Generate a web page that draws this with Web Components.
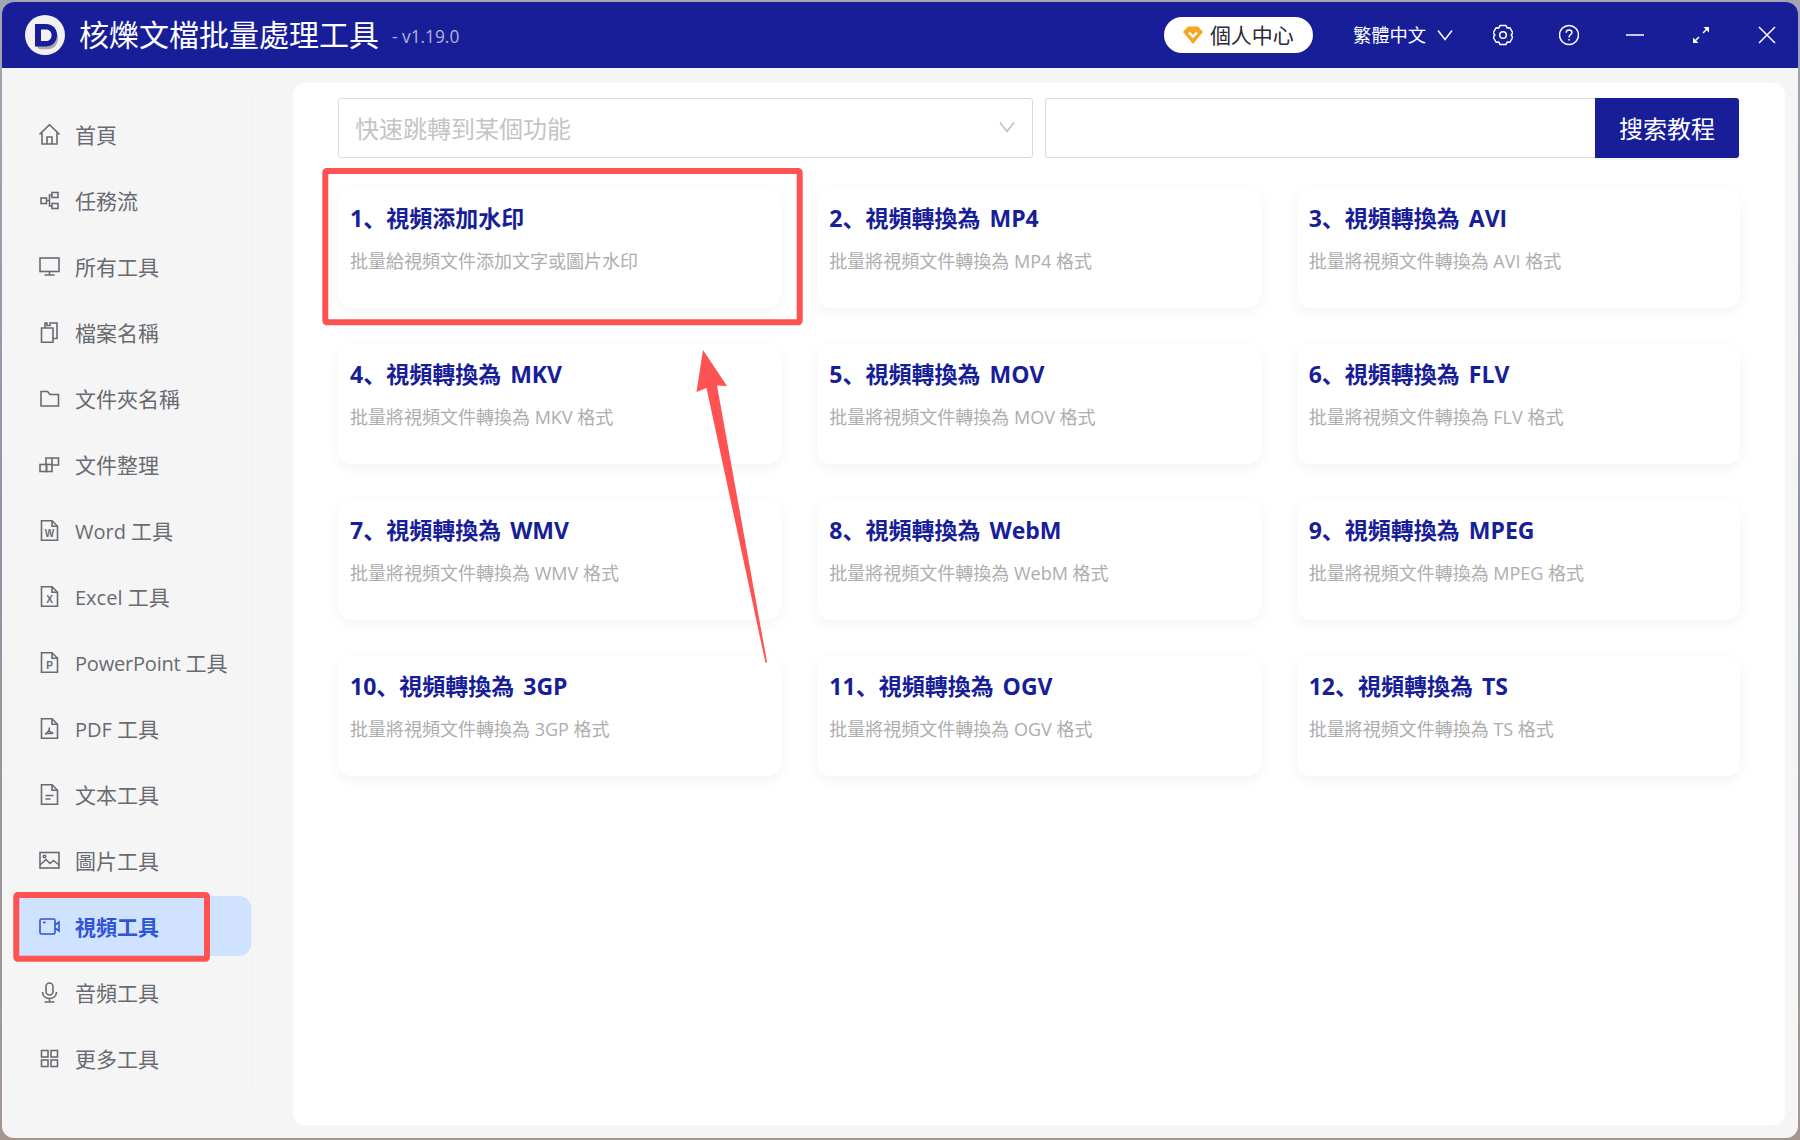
<!DOCTYPE html>
<html lang="zh">
<head>
<meta charset="utf-8">
<title>核爍文檔批量處理工具</title>
<style>
  html, body { margin: 0; height: 100%; }
  body {
    position: relative;
    width: 1800px;
    height: 1140px;
    overflow: hidden;
    background: linear-gradient(180deg, #a3a6b2 0%, #8e95a5 45%, #a49792 100%);
    font-family: "Open Sans", "Noto Sans CJK SC", sans-serif;
  }
  /* latin labels in the menu run a touch smaller than the CJK beside them */
  .en { font-size: 20px; }
</style>
</head>
<body>
<app-window>
  <title-bar slot="top"></title-bar>
  <side-nav slot="side">
    <nav-item icon="home">首頁</nav-item>
    <nav-item icon="flow">任務流</nav-item>
    <nav-item icon="monitor">所有工具</nav-item>
    <nav-item icon="files">檔案名稱</nav-item>
    <nav-item icon="folder">文件夾名稱</nav-item>
    <nav-item icon="blocks">文件整理</nav-item>
    <nav-item icon="word"><span class="en">Word </span>工具</nav-item>
    <nav-item icon="excel"><span class="en">Excel </span>工具</nav-item>
    <nav-item icon="ppt"><span class="en" style="letter-spacing:-.2px">PowerPoint </span>工具</nav-item>
    <nav-item icon="pdf"><span class="en">PDF </span>工具</nav-item>
    <nav-item icon="text">文本工具</nav-item>
    <nav-item icon="image">圖片工具</nav-item>
    <nav-item icon="video" active>視頻工具</nav-item>
    <nav-item icon="mic">音頻工具</nav-item>
    <nav-item icon="grid">更多工具</nav-item>
  </side-nav>
  <content-panel>
    <search-row></search-row>
    <card-grid>
      <tool-card heading="1、視頻添加水印">批量給視頻文件添加文字或圖片水印</tool-card>
      <tool-card heading="2、視頻轉換為 MP4">批量將視頻文件轉換為 MP4 格式</tool-card>
      <tool-card heading="3、視頻轉換為 AVI">批量將視頻文件轉換為 AVI 格式</tool-card>
      <tool-card heading="4、視頻轉換為 MKV">批量將視頻文件轉換為 MKV 格式</tool-card>
      <tool-card heading="5、視頻轉換為 MOV">批量將視頻文件轉換為 MOV 格式</tool-card>
      <tool-card heading="6、視頻轉換為 FLV">批量將視頻文件轉換為 FLV 格式</tool-card>
      <tool-card heading="7、視頻轉換為 WMV">批量將視頻文件轉換為 WMV 格式</tool-card>
      <tool-card heading="8、視頻轉換為 WebM">批量將視頻文件轉換為 WebM 格式</tool-card>
      <tool-card heading="9、視頻轉換為 MPEG">批量將視頻文件轉換為 MPEG 格式</tool-card>
      <tool-card heading="10、視頻轉換為 3GP">批量將視頻文件轉換為 3GP 格式</tool-card>
      <tool-card heading="11、視頻轉換為 OGV">批量將視頻文件轉換為 OGV 格式</tool-card>
      <tool-card heading="12、視頻轉換為 TS">批量將視頻文件轉換為 TS 格式</tool-card>
    </card-grid>
  </content-panel>
</app-window>
<mark-up></mark-up>

<script>
// file outline shared by the document icons, the letter/glyph goes on top
const FILE = `<path d="M2.5 .8h10.500l5.500 5.500v13.900H2.500z"/><path d="M13 .8v5.500h5.500"/>`;
const fileLetter = (c) => `${FILE}<text x="10.5" y="16.500" text-anchor="middle" font-family="Liberation Sans, sans-serif" font-size="10" font-weight="700" fill="currentColor" stroke="none">${c}</text>`;

const ICONS = {
  home: `<path d="M.5 10.500 10.500 .8 20.500 10.500"/><path d="M3 8.500V20H18V8.500"/><path d="M8 20V13H13V20"/>`,
  flow: `<rect x="2" y="8" width="5.500" height="5.500"/><rect x="13" y="2.500" width="6" height="5"/><rect x="13" y="13.500" width="6" height="5"/><path d="M7.500 10.500H10.500V5H13M10.500 10.500V16H13"/>`,
  monitor: `<rect x="1" y="2" width="19" height="13.500"/><path d="M10.500 15.500V19M5.500 19H15.500"/>`,
  files: `<path d="M2.500 6H14V20.200H2.500z"/><path d="M6 6V1H8V3.500H11V1H18V16.500H14"/>`,
  folder: `<path d="M2 3.500H8.500L11 6.500H19.500V18H2z"/>`,
  blocks: `<rect x="1" y="10.500" width="6.500" height="7"/><rect x="7.500" y="10.500" width="5.500" height="7"/><path d="M7 10.500V4H19.500V11H13M13 4V10.500"/>`,
  word: fileLetter("W"),
  excel: fileLetter("X"),
  ppt: fileLetter("P"),
  pdf: `${FILE}<path d="M10.500 9.500c-.2 3-2 5.500-4.500 7M10 12.500c1 1.600 2.500 2.600 4.500 2.800M6.500 15.500h7"/>`,
  text: `${FILE}<path d="M6.500 11.500H14.500M6.500 15H11.500"/>`,
  image: `<rect x="1" y="2.500" width="19" height="15.500"/><circle cx="5.500" cy="6.500" r="1.300"/><path d="M1 15 7 9.500 11 13.500 14.500 10.500 20 15"/>`,
  video: `<rect x="1" y="3" width="15" height="15" rx="1.500"/><path d="M16 9 20 6V15L16 12"/><path d="M4 6.500H6.500"/>`,
  mic: `<rect x="7" y="1" width="7" height="12" rx="3.500"/><path d="M3.500 10c0 4 3 6.500 7 6.500s7-2.500 7-6.500M10.500 16.500V20M5.500 20H15.500"/>`,
  grid: `<rect x="2.500" y="2.500" width="6.500" height="6.500"/><rect x="12" y="2.500" width="6.500" height="6.500"/><rect x="2.500" y="12" width="6.500" height="6.500"/><rect x="12" y="12" width="6.500" height="6.500"/>`,
};

// six lobed gear outline, centre (10,11)
function gearPath() {
  const pts = [];
  for (let i = 0; i < 6; i++) {
    const a = (i * 60 - 90) * Math.PI / 180;
    for (const [d, r] of [[-17, 10], [17, 10], [30, 8.2]]) {
      const t = a + d * Math.PI / 180;
      pts.push((10 + r * Math.cos(t)).toFixed(2) + " " + (11 + r * Math.sin(t)).toFixed(2));
    }
  }
  return "M" + pts.join("L") + "Z";
}

class AppWindow extends HTMLElement {
  constructor() {
    super();
    this.attachShadow({ mode: "open" }).innerHTML = `
      <style>
        :host {
          display: grid;
          grid-template-columns: 291px 1fr;
          grid-template-rows: 66px 1fr;
          width: 1796px;
          height: 1136px;
          margin: 2px;
          background: #f5f5f5;
          border-radius: 12px;
          overflow: hidden;
        }
        ::slotted([slot="top"]) { grid-column: 1 / -1; }
      </style>
      <slot name="top"></slot>
      <slot name="side"></slot>
      <slot></slot>`;
  }
}

class TitleBar extends HTMLElement {
  constructor() {
    super();
    const ctl = 'fill="none" stroke="#fff" stroke-width="1.5"';
    this.attachShadow({ mode: "open" }).innerHTML = `
      <style>
        :host {
          display: flex;
          align-items: center;
          height: 66px;
          padding: 0 21px 0 23px;
          box-sizing: border-box;
          background: #181e98;
          color: #fff;
        }
        .logo { width: 40px; height: 40px; margin-right: 14px; flex: none; }
        .name { font-size: 30px; line-height: 40px; white-space: nowrap; }
        .ver { font-size: 17.3px; color: #b3b5dc; margin: 2px 0 0 13px; white-space: nowrap; }
        .pill {
          display: flex;
          align-items: center;
          width: 149px;
          height: 36px;
          margin-left: auto;
          padding-left: 19px;
          box-sizing: border-box;
          gap: 7px;
          background: #fff;
          border-radius: 18px;
          color: #2b2b33;
          font-size: 21px;
          white-space: nowrap;
        }
        .pill span { margin-top: -2px; }
        .lang { display: flex; align-items: center; gap: 11px; margin-left: 40px; font-size: 18.3px; white-space: nowrap; }
        .lang span { margin-top: -2px; }
        .ctl { display: flex; gap: 46px; margin-left: 40px; }
        svg { display: block; }
      </style>
      <svg class="logo" viewBox="0 0 40 40">
        <circle cx="20" cy="20" r="20" fill="#f1f1f1"/>
        <path d="M11 11H21C28 11 32 15 32 21.5C32 28 28 32.5 21 32.5H13.5L11 30Z" fill="#a9a9a9" transform="translate(1 1.8)"/>
        <path d="M10 9H21C28 9 32 14 32 20C32 27 27 31.5 21 31.5H10Z" fill="#181e98"/>
        <path d="M16 14.5H21C24.5 14.5 26.5 17 26.5 20.2C26.5 23.8 24 26 21 26H16Z" fill="#f1f1f1"/>
      </svg>
      <span class="name">核爍文檔批量處理工具</span>
      <span class="ver">- v1.19.0</span>
      <div class="pill">
        <svg width="20" height="18" viewBox="0 0 20 18"><path d="M5 .5H15L20 6 10 18 0 6Z" fill="#f5a623"/><path d="M6 6.5 10 10.5 14 6.5" fill="none" stroke="#fff" stroke-width="2.4"/></svg>
        <span>個人中心</span>
      </div>
      <div class="lang">
        <span>繁體中文</span>
        <svg width="16" height="12" viewBox="0 0 16 12"><path d="M1 1.5 8 10.5 15 1.5" ${ctl}/></svg>
      </div>
      <div class="ctl">
        <svg width="20" height="22" viewBox="0 0 20 22" ${ctl}><path d="${gearPath()}" stroke-linejoin="round"/><circle cx="10" cy="11" r="3.3"/></svg>
        <svg width="20" height="22" viewBox="0 0 20 22" ${ctl}><circle cx="10" cy="11" r="9.5"/><path d="M7.2 8.7C7.2 7 8.5 6 10 6C11.7 6 12.9 7 12.9 8.5C12.9 10.5 10 10.7 10 13.5"/><path d="M10 15V16.5"/></svg>
        <svg width="20" height="22" viewBox="0 0 20 22" ${ctl}><path d="M1 11H19"/></svg>
        <svg width="20" height="22" viewBox="0 0 20 22"><g ${ctl}><path d="M12 9 17 4M3 18 8 13"/></g><path d="M12.5 3H18V8.5ZM2 13.5V19H7.5Z" fill="#fff"/></svg>
        <svg width="20" height="22" viewBox="0 0 20 22" ${ctl}><path d="M2 3 18 19M18 3 2 19"/></svg>
      </div>`;
  }
}

class SideNav extends HTMLElement {
  constructor() {
    super();
    this.attachShadow({ mode: "open" }).innerHTML = `
      <style>
        :host {
          display: block;
          position: relative;
          padding: 36px 0 0 16px;
          width: 233px;
        }
        :host::after {
          content: "";
          position: absolute;
          left: 249px;
          top: 30px;
          bottom: 46px;
          width: 1px;
          background: #f0f0f0;
        }
        .list { display: flex; flex-direction: column; gap: 6px; }
      </style>
      <div class="list"><slot></slot></div>`;
  }
}

class NavItem extends HTMLElement {
  connectedCallback() {
    if (this.shadowRoot) return;
    this.attachShadow({ mode: "open" }).innerHTML = `
      <style>
        :host {
          display: flex;
          align-items: center;
          gap: 15px;
          height: 60px;
          padding-left: 21px;
          border-radius: 0 12px 12px 0;
          color: #676b72;
          font-size: 21px;
          white-space: pre;
        }
        :host([active]) {
          background: #cfe2ff;
          color: #2f55d4;
          font-weight: 700;
        }
        svg { flex: none; fill: none; stroke: currentColor; stroke-width: 1.6; }
      </style>
      <svg width="21" height="21" viewBox="0 0 21 21">${ICONS[this.getAttribute("icon")] || ""}</svg>
      <span><slot></slot></span>`;
  }
}

class ContentPanel extends HTMLElement {
  constructor() {
    super();
    this.attachShadow({ mode: "open" }).innerHTML = `
      <style>
        :host {
          display: flex;
          flex-direction: column;
          gap: 30px;
          margin: 15px 13px 13px 0;
          padding: 15px 45px 0;
          background: #fff;
          border-radius: 12px;
        }
      </style>
      <slot></slot>`;
  }
}

class SearchRow extends HTMLElement {
  constructor() {
    super();
    this.attachShadow({ mode: "open" }).innerHTML = `
      <style>
        :host {
          display: flex;
          height: 60px;
          margin-right: 1px;
          font-size: 24px;
        }
        .pick, .query { box-sizing: border-box; border: 1.5px solid #dcdcdc; }
        .pick {
          display: flex;
          align-items: center;
          justify-content: space-between;
          width: 695px;
          padding: 0 17px 2px 16px;
          border-radius: 3px;
          color: #c4c4c4;
        }
        .query { flex: 1; margin-left: 12px; border-right: 0; border-radius: 3px 0 0 3px; }
        .go {
          box-sizing: border-box;
          width: 144px;
          padding-bottom: 2px;
          display: flex;
          align-items: center;
          justify-content: center;
          background: #181e98;
          color: #fff;
          border-radius: 0 3px 3px 0;
          box-shadow: 0 2px 2px rgba(0, 0, 0, .04);
        }
      </style>
      <div class="pick">
        <span>快速跳轉到某個功能</span>
        <svg width="16" height="12" viewBox="0 0 16 12"><path d="M1 1.5 8 10.5 15 1.5" fill="none" stroke="#bdbdc4" stroke-width="1.5"/></svg>
      </div>
      <div class="query"></div>
      <div class="go">搜索教程</div>`;
  }
}

class CardGrid extends HTMLElement {
  constructor() {
    super();
    this.attachShadow({ mode: "open" }).innerHTML = `
      <style>
        :host {
          display: grid;
          grid-template-columns: repeat(3, 1fr);
          grid-auto-rows: 120px;
          gap: 36px;
        }
      </style>
      <slot></slot>`;
  }
}

class ToolCard extends HTMLElement {
  connectedCallback() {
    if (this.shadowRoot) return;
    this.attachShadow({ mode: "open" }).innerHTML = `
      <style>
        :host {
          display: block;
          box-sizing: border-box;
          padding: 12px 12px 0;
          background: #fff;
          border-radius: 14px;
          box-shadow: 0 4px 14px rgba(0, 0, 0, .05);
        }
        h3 {
          margin: 0;
          font-size: 23px;
          line-height: 36px;
          font-weight: 700;
          color: #181e98;
          white-space: nowrap;
          word-spacing: 3px;
        }
        p {
          margin: 11.5px 0 0;
          font-size: 18px;
          line-height: 26px;
          color: #adadad;
          white-space: nowrap;
        }
      </style>
      <h3>${this.getAttribute("heading")}</h3>
      <p><slot></slot></p>`;
  }
}

// red annotation drawn over the finished screenshot
class MarkUp extends HTMLElement {
  constructor() {
    super();
    this.attachShadow({ mode: "open" }).innerHTML = `
      <style>
        :host { position: absolute; inset: 0; pointer-events: none; }
        svg { display: block; }
      </style>
      <svg width="1800" height="1140" viewBox="0 0 1800 1140">
        <g fill="none" stroke="#ff5252" stroke-width="6">
          <rect x="325.3" y="171" width="474.4" height="151.3" rx="1.5"/>
          <rect x="16.3" y="895" width="190.7" height="63.7" rx="1.5"/>
        </g>
        <polygon fill="#ff5252" points="703,350 727,386 717,385.5 767,662 765.5,663 706.5,388 696.5,392"/>
      </svg>`;
  }
}

customElements.define("app-window", AppWindow);
customElements.define("title-bar", TitleBar);
customElements.define("side-nav", SideNav);
customElements.define("nav-item", NavItem);
customElements.define("content-panel", ContentPanel);
customElements.define("search-row", SearchRow);
customElements.define("card-grid", CardGrid);
customElements.define("tool-card", ToolCard);
customElements.define("mark-up", MarkUp);
</script>
</body>
</html>
